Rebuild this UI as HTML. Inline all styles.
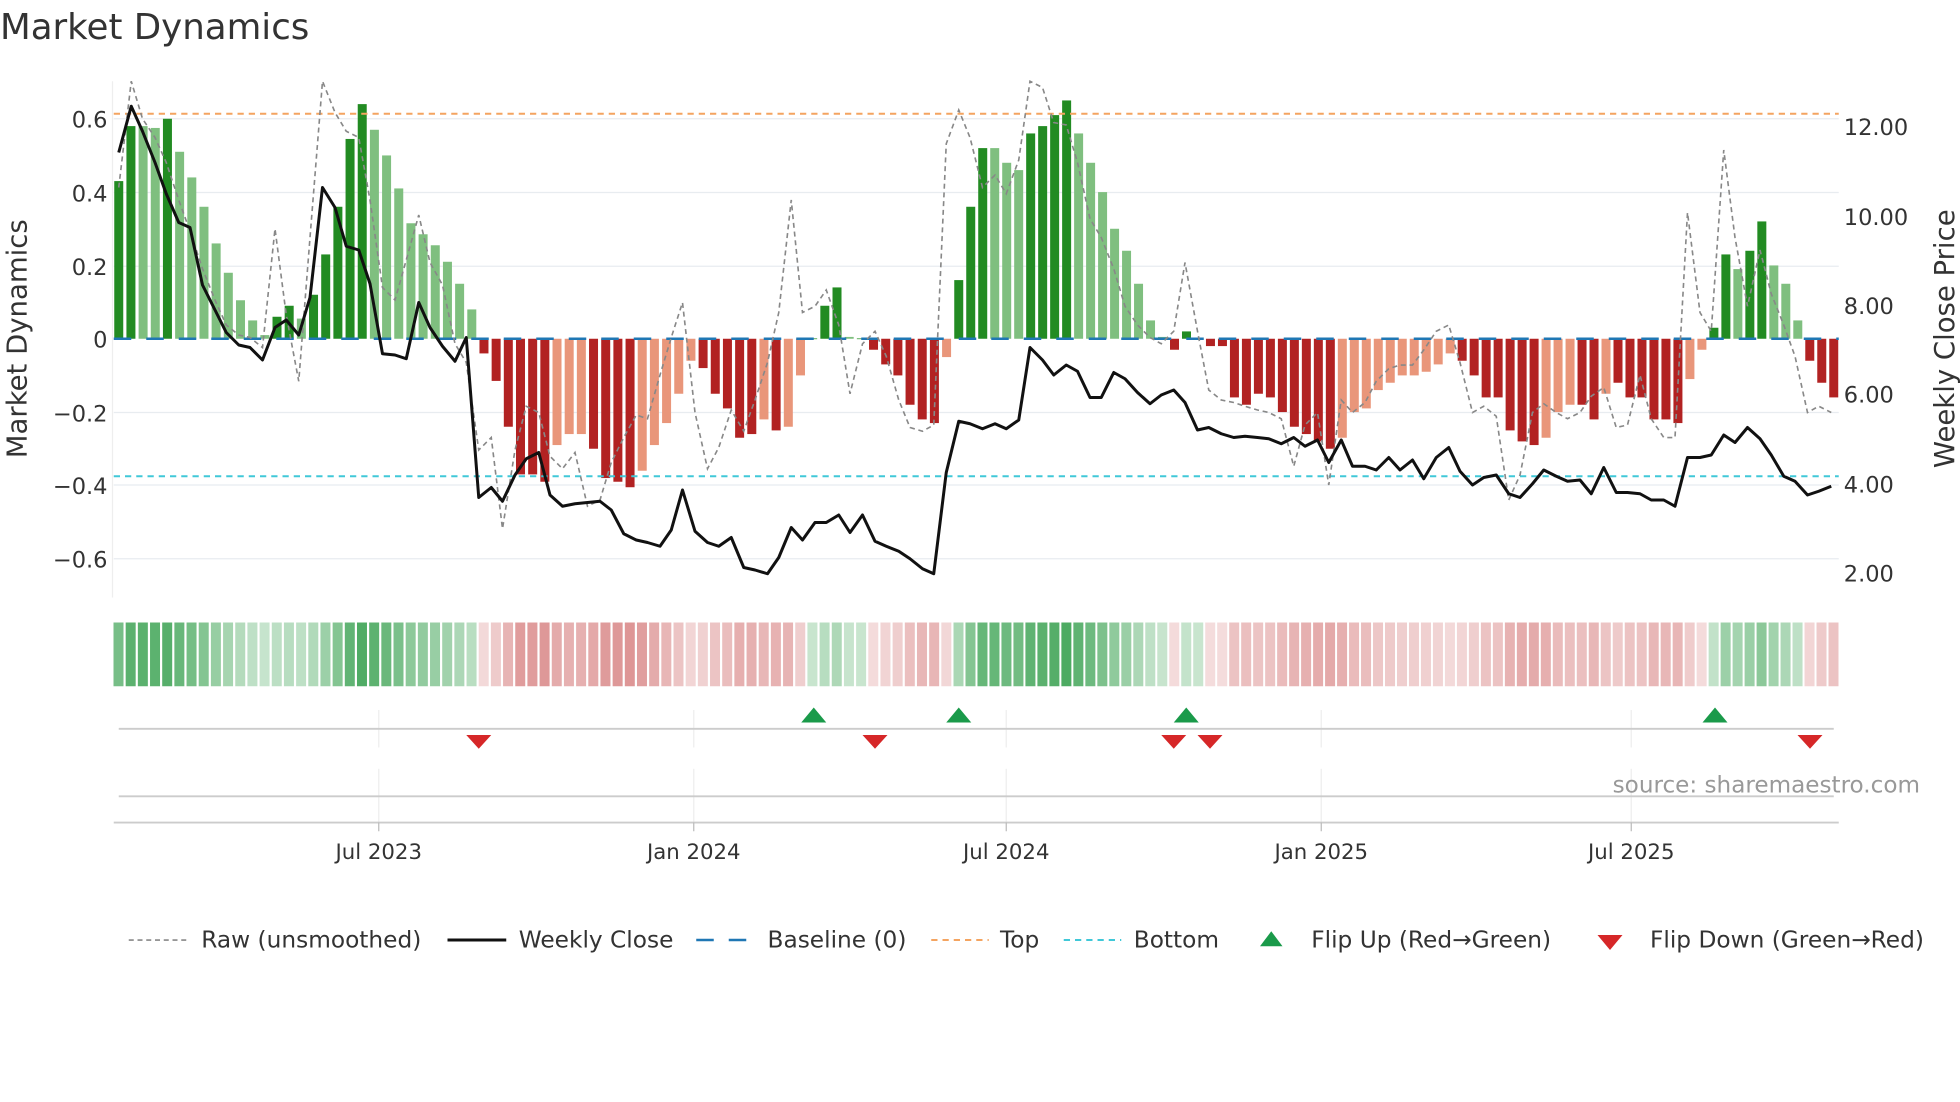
<!DOCTYPE html>
<html><head><meta charset="utf-8"><style>
html,body{margin:0;padding:0;background:#fff;}
svg{display:block;font-family:"DejaVu Sans","Liberation Sans",sans-serif;}
</style></head><body>
<svg id="s" width="1960" height="1102" viewBox="0 0 1568 881.6" xmlns="http://www.w3.org/2000/svg">
<rect width="1568" height="882" fill="#fff"/>
<text x="0" y="31" font-size="28.5" fill="#333">Market Dynamics</text>
<g id="grid" stroke="#e8ecf0" stroke-width="1">
<line x1="91" x2="1471" y1="95" y2="95"/><line x1="91" x2="1471" y1="154" y2="154"/><line x1="91" x2="1471" y1="213" y2="213"/><line x1="91" x2="1471" y1="330" y2="330"/><line x1="91" x2="1471" y1="388" y2="388"/><line x1="91" x2="1471" y1="447" y2="447"/>
</g>
<line x1="90" x2="90" y1="65" y2="478" stroke="#eee"/>
<g font-size="18" fill="#333" text-anchor="end">
<text x="86" y="102">0.6</text><text x="86" y="161">0.4</text><text x="86" y="220">0.2</text><text x="86" y="278">0</text><text x="86" y="337">−0.2</text><text x="86" y="395">−0.4</text><text x="86" y="454">−0.6</text>
</g>
<g font-size="18" fill="#333">
<text x="1475" y="108">12.00</text><text x="1475" y="180">10.00</text><text x="1475" y="251">8.00</text><text x="1475" y="322">6.00</text><text x="1475" y="394">4.00</text><text x="1475" y="465">2.00</text>
</g>
<text transform="translate(21,271) rotate(-90)" font-size="22" fill="#333" text-anchor="middle">Market Dynamics</text>
<text transform="translate(1563,271) rotate(-90)" font-size="22" fill="#333" text-anchor="middle">Weekly Close Price</text>
<g id="bars"></g>
<line x1="91" x2="1471" y1="271" y2="271" stroke="#1f77b4" stroke-width="2" stroke-dasharray="14,12"/>
<line x1="91" x2="1471" y1="91" y2="91" stroke="#f4a460" stroke-width="1.6" stroke-dasharray="5,4"/>
<line x1="91" x2="1471" y1="381" y2="381" stroke="#40c8d8" stroke-width="1.6" stroke-dasharray="5,4"/>
<polyline id="raw" fill="none" stroke="#888" stroke-width="1.3" stroke-dasharray="4,3"/>
<polyline id="close" fill="none" stroke="#111" stroke-width="2.4" stroke-linejoin="round"/>
<g id="heat"></g>
<g stroke="#eee" stroke-width="1">
<line x1="303" x2="303" y1="568" y2="598"/><line x1="555" x2="555" y1="568" y2="598"/><line x1="805" x2="805" y1="568" y2="598"/><line x1="1057" x2="1057" y1="568" y2="598"/><line x1="1305" x2="1305" y1="568" y2="598"/>
<line x1="303" x2="303" y1="615" y2="658"/><line x1="555" x2="555" y1="615" y2="658"/><line x1="805" x2="805" y1="615" y2="658"/><line x1="1057" x2="1057" y1="615" y2="658"/><line x1="1305" x2="1305" y1="615" y2="658"/>
</g>
<line x1="95" x2="1467" y1="583" y2="583" stroke="#ccc" stroke-width="1.5"/>
<line x1="95" x2="1467" y1="637" y2="637" stroke="#ccc" stroke-width="1.5"/>
<line x1="91" x2="1471" y1="658" y2="658" stroke="#ccc" stroke-width="1.5"/>
<g stroke="#bbb"><line x1="303" x2="303" y1="658" y2="665"/><line x1="555" x2="555" y1="658" y2="665"/><line x1="805" x2="805" y1="658" y2="665"/><line x1="1057" x2="1057" y1="658" y2="665"/><line x1="1305" x2="1305" y1="658" y2="665"/></g>
<g id="flips"></g>
<text x="1536" y="634" font-size="18.5" fill="#999" text-anchor="end">source: sharemaestro.com</text>
<g font-size="17" fill="#333" text-anchor="middle">
<text x="303" y="687">Jul 2023</text><text x="555" y="687">Jan 2024</text><text x="805" y="687">Jul 2024</text><text x="1057" y="687">Jan 2025</text><text x="1305" y="687">Jul 2025</text>
</g>
<g font-size="18.6" fill="#333">
<line x1="103" x2="150" y1="752" y2="752" stroke="#888" stroke-width="1.3" stroke-dasharray="4,3"/><text x="161" y="758">Raw (unsmoothed)</text>
<line x1="358" x2="405" y1="752" y2="752" stroke="#111" stroke-width="2.4"/><text x="415" y="758">Weekly Close</text>
<line x1="557" x2="603" y1="752" y2="752" stroke="#1f77b4" stroke-width="2" stroke-dasharray="14,12"/><text x="614" y="758">Baseline (0)</text>
<line x1="745" x2="791" y1="752" y2="752" stroke="#f4a460" stroke-width="1.6" stroke-dasharray="5,4"/><text x="800" y="758">Top</text>
<line x1="851" x2="897" y1="752" y2="752" stroke="#40c8d8" stroke-width="1.6" stroke-dasharray="5,4"/><text x="907" y="758">Bottom</text>
<polygon points="1008,757 1026,757 1017,745" fill="#1a9a4a"/><text x="1049" y="758">Flip Up (Red→Green)</text>
<polygon points="1278,748 1298,748 1288,760" fill="#d62728"/><text x="1320" y="758">Flip Down (Green→Red)</text>
</g>
</svg>
<script>
var V=[[.43,1],[.58,1],[.58,0],[.575,0],[.6,1],[.51,0],[.44,0],[.36,0],[.26,0],[.18,0],[.105,0],[.05,0],[.01,0],[.06,1],[.09,1],[.055,0],[.12,1],[.23,1],[.36,1],[.545,1],[.64,1],[.57,0],[.5,0],[.41,0],[.315,0],[.285,0],[.255,0],[.21,0],[.15,0],[.08,0],
[-.04,1],[-.115,1],[-.24,1],[-.37,1],[-.37,1],[-.39,1],[-.29,0],[-.26,0],[-.26,0],[-.3,1],[-.38,1],[-.39,1],[-.405,1],[-.36,0],[-.29,0],[-.23,0],[-.15,0],[-.06,0],[-.08,1],[-.15,1],[-.19,1],[-.27,1],[-.26,1],[-.22,0],[-.25,1],[-.24,0],[-.1,0],[.002,0],[.09,1],[.14,1],[.005,0],[.002,0],[-.03,1],[-.07,1],[-.1,1],[-.18,1],[-.22,1],[-.23,1],[-.05,0],
[.16,1],[.36,1],[.52,1],[.52,0],[.48,0],[.46,0],[.56,1],[.58,1],[.61,1],[.65,1],[.56,0],[.48,0],[.4,0],[.3,0],[.24,0],[.15,0],[.05,0],[.005,0],[-.03,1],[.02,1],[.003,0],[-.02,1],[-.02,1],
[-.16,1],[-.18,1],[-.15,1],[-.16,1],[-.2,1],[-.24,1],[-.26,1],[-.28,1],[-.3,1],[-.27,0],[-.2,0],[-.19,0],[-.14,0],[-.12,0],[-.1,0],[-.1,0],[-.09,0],[-.07,0],[-.04,0],[-.06,1],[-.1,1],[-.16,1],[-.16,1],[-.25,1],[-.28,1],[-.29,1],[-.27,0],[-.2,0],[-.18,0],[-.18,1],[-.22,1],[-.15,0],[-.12,1],[-.16,1],[-.16,1],[-.22,1],[-.22,1],[-.23,1],[-.11,0],[-.03,0],[.03,1],[.23,1],[.19,0],[.24,1],[.32,1],[.2,0],[.15,0],[.05,0],[-.06,1],[-.12,1],[-.16,1]];
var NS="http://www.w3.org/2000/svg";
function el(t,a,p){var e=document.createElementNS(NS,t);for(var k in a)e.setAttribute(k,a[k]);p.appendChild(e);}
var B=document.getElementById('bars'),H=document.getElementById('heat');
var n=V.length;
// piecewise x mapping: anchor index 69 (first green of 2nd phase) at x=767
function X(i){return i<=69? 95+i*(767-95)/69 : 767+(i-69)*(1467-767)/(n-1-69);}
V.forEach(function(d,i){var v=d[0],x=X(i),y=271-v*293.3;var c=v>=0?(d[1]?'#228b22':'#7fbf7f'):(d[1]?'#b22222':'#e9967a');
el('rect',{x:x-3.6,y:Math.min(y,271),width:7.2,height:Math.max(Math.abs(271-y),1),fill:c},B);
var a,hc;if(v>=0){a=Math.min(.85,.25+v*.85);hc='rgba(34,150,60,'+a+')';}else{a=Math.min(.6,.15+(-v)*.9);hc='rgba(190,50,50,'+a+')';}
el('rect',{x:x-4.2,y:498,width:8,height:51,fill:hc},H);});
var C=[[95,122],[105,85],[114,105],[124,130],[133,155],[143,178],[152,182],[162,228],[172,248],[181,266],[191,276],[200,278],[210,288],[220,262],[229,256],[239,268],[248,238],[258,150],[268,166],[277,197],[287,200],[296,227],[306,283],[316,284],[325,287],[335,242],[344,262],[354,277],[364,289],[373,270],[383,398],[393,390],[402,401],[412,380],[421,367],[431,362],[440,396],[450,405],[460,403],[470,402],[480,401],[489,408],[499,427],[509,432],[518,434],[528,437],[537,424],[546,392],[556,425],[566,434],[575,437],[585,430],[595,454],[604,456],[614,459],[623,446],[633,422],[642,432],[652,418],[661,418],[671,412],[680,426],[690,412],[700,433],[709,437],[719,441],[728,447],[738,455],[747,459],[757,378],[767,337],[776,339],[786,343],[796,339],[805,343],[815,336],[824,278],[834,288],[843,300],[853,292],[862,297],[872,318],[881,318],[891,298],[900,303],[910,314],[920,323],[929,316],[939,312],[948,322],[958,344],[967,342],[977,347],[987,350],[996,349],[1006,350],[1015,351],[1025,355],[1035,350],[1044,357],[1054,352],[1063,370],[1073,352],[1082,373],[1092,373],[1101,376],[1111,366],[1120,376],[1130,368],[1139,383],[1149,366],[1159,358],[1168,377],[1178,388],[1187,382],[1197,380],[1207,395],[1216,398],[1226,387],[1235,376],[1245,381],[1254,385],[1264,384],[1273,395],[1283,374],[1293,394],[1302,394],[1312,395],[1321,400],[1331,400],[1340,405],[1350,366],[1360,366],[1369,364],[1379,348],[1388,354],[1398,342],[1408,351],[1417,364],[1427,381],[1436,385],[1446,396],[1455,393],[1465,389]];
var R=[[95,150],[105,65],[114,95],[124,110],[133,130],[143,160],[152,185],[162,215],[172,240],[181,260],[191,268],[200,270],[210,278],[220,183],[229,252],[239,305],[248,190],[258,65],[268,90],[277,105],[287,110],[296,160],[306,230],[316,240],[325,208],[335,172],[344,210],[354,228],[364,275],[373,290],[383,360],[393,350],[402,423],[412,360],[421,325],[431,330],[440,365],[450,375],[460,362],[470,405],[480,400],[489,370],[499,350],[509,332],[518,335],[528,300],[537,270],[546,242],[556,330],[566,375],[575,358],[585,328],[595,345],[604,320],[614,290],[623,250],[633,160],[642,250],[652,245],[661,232],[671,260],[680,315],[690,275],[700,265],[709,285],[719,320],[728,342],[738,345],[747,340],[757,115],[767,88],[776,110],[786,150],[796,140],[805,155],[815,128],[824,65],[834,70],[843,98],[853,100],[862,130],[872,175],[881,190],[891,215],[900,245],[910,260],[920,270],[929,275],[939,265],[948,210],[958,265],[967,312],[977,320],[987,322],[996,325],[1006,328],[1015,330],[1025,335],[1035,373],[1044,340],[1054,330],[1063,388],[1073,320],[1082,330],[1092,322],[1101,305],[1111,295],[1120,292],[1130,292],[1139,280],[1149,265],[1159,260],[1168,290],[1178,330],[1187,325],[1197,333],[1207,400],[1216,380],[1226,330],[1235,323],[1245,330],[1254,335],[1264,330],[1273,317],[1283,310],[1293,342],[1302,340],[1312,300],[1321,335],[1331,350],[1340,350],[1350,170],[1360,250],[1369,265],[1379,120],[1388,190],[1398,245],[1408,200],[1417,235],[1427,260],[1436,285],[1446,330],[1455,325],[1465,330]];
document.getElementById('close').setAttribute('points',C.map(function(p){return p.join(',')}).join(' '));
document.getElementById('raw').setAttribute('points',R.map(function(p){return p.join(',')}).join(' '));
var F=document.getElementById('flips');
[651,767,949,1372].forEach(function(x){el('polygon',{points:(x-10)+',578 '+(x+10)+',578 '+x+',566',fill:'#1a9a4a'},F);});
[383,700,939,968,1448].forEach(function(x){el('polygon',{points:(x-10)+',588 '+(x+10)+',588 '+x+',599',fill:'#d62728'},F);});
</script>
</body></html>
